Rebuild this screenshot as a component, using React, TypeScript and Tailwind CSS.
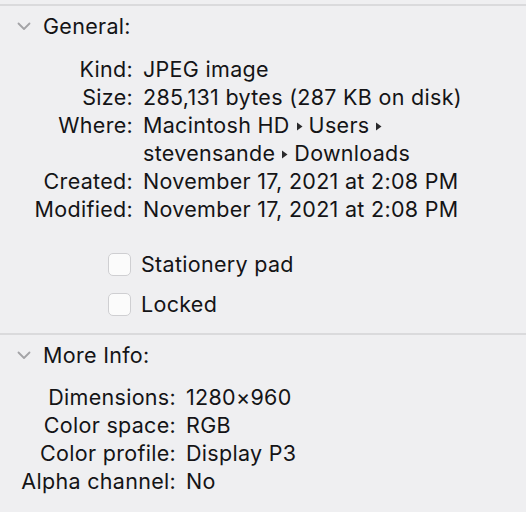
import React from "react";

const Chevron = () => (
  <svg width="14" height="9" viewBox="0 0 14 9" className="shrink-0">
    <path d="M1.5 1.5 L7 7 L12.5 1.5" fill="none" stroke="#a3a3a6" strokeWidth="1.8" strokeLinecap="round" strokeLinejoin="round" />
  </svg>
);

const Tri = () => (
  <svg width="19" height="9" viewBox="0 0 19 9" className="inline-block align-[2px]">
    <path d="M7 0.5 L12.5 4.5 L7 8.5 Z" fill="#2a2a2c" />
  </svg>
);

const Row = ({ label, value, w }: { label: string; value: React.ReactNode; w: string }) => (
  <div className="flex h-[28px] items-center">
    <div className={`${w} shrink-0 text-right whitespace-nowrap`}>{label}</div>
    <div className="pl-[10px] whitespace-nowrap">{value}</div>
  </div>
);

const Checkbox = ({ label }: { label: string }) => (
  <div className="flex h-[28px] items-center">
    <div className="ml-[108px] h-[23px] w-[23px] shrink-0 rounded-[5px] border border-[#cfcfd2] bg-[#fbfbfb]" />
    <div className="pl-[10px]">{label}</div>
  </div>
);

export default function App() {
  return (
    <div
      className="h-[512px] w-[526px] overflow-hidden bg-[#efeff1] text-[21.5px] leading-[28px] tracking-[0.3px] text-[#141416]"
      style={{ fontFamily: "Inter, 'Liberation Sans', sans-serif" }}
    >
      <div className="h-[4px]" />
      <div className="border-t-2 border-[#dadadc]" />
      <div className="mt-[6px] flex h-[28px] items-center">
        <div className="ml-[17px] mr-[12px] flex w-[14px] items-center"><Chevron /></div>
        <span>General:</span>
      </div>
      <div className="mt-[15px] flex flex-col">
        <Row w="w-[133px]" label="Kind:" value="JPEG image" />
        <Row w="w-[133px]" label="Size:" value="285,131 bytes (287 KB on disk)" />
        <Row w="w-[133px]" label="Where:" value={<>Macintosh HD<Tri />Users<Tri /></>} />
        <Row w="w-[133px]" label="" value={<>stevensande<Tri />Downloads</>} />
        <Row w="w-[133px]" label="Created:" value="November 17, 2021 at 2:08 PM" />
        <Row w="w-[133px]" label="Modified:" value="November 17, 2021 at 2:08 PM" />
      </div>
      <div className="mt-[27px] flex flex-col gap-[12px]">
        <Checkbox label="Stationery pad" />
        <Checkbox label="Locked" />
      </div>
      <div className="mt-[15px] border-t-2 border-[#dadadc]" />
      <div className="mt-[6px] flex h-[28px] items-center">
        <div className="ml-[17px] mr-[12px] flex w-[14px] items-center"><Chevron /></div>
        <span>More Info:</span>
      </div>
      <div className="mt-[14px] flex flex-col">
        <Row w="w-[176px]" label="Dimensions:" value="1280×960" />
        <Row w="w-[176px]" label="Color space:" value="RGB" />
        <Row w="w-[176px]" label="Color profile:" value="Display P3" />
        <Row w="w-[176px]" label="Alpha channel:" value="No" />
      </div>
    </div>
  );
}
